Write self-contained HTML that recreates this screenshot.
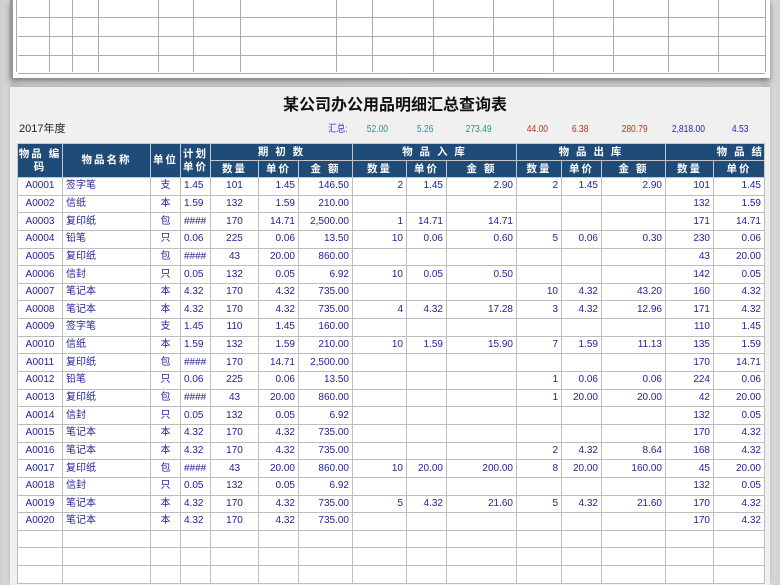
<!DOCTYPE html>
<html><head><meta charset="utf-8"><style>
*{margin:0;padding:0;box-sizing:border-box}
html,body{width:780px;height:585px;overflow:hidden}
body{background:linear-gradient(90deg,#cfcfcf,#e8e8e8 3%,#ececec 97%,#cfcfcf);position:relative;font-family:"Liberation Sans","Noto Sans CJK SC",sans-serif}
.top{position:absolute;left:10px;top:-2px;width:760px;height:80px;background:#fff;box-shadow:0 4px 6px rgba(0,0,0,.45);border-left:3px solid #999;}
.vl{position:absolute;top:0;height:74px;width:1px;background:#aaa}
.hl{position:absolute;left:5px;right:5px;height:1px;background:#aaa}
.panel{position:absolute;left:10px;top:87px;width:760px;height:498px;background:#f0f0f0;box-shadow:0 -2px 4px rgba(0,0,0,.2)}
.title{position:absolute;left:0;width:790px;top:96px;text-align:center;font-size:16px;line-height:20px;font-weight:bold;color:#111}
.yr{position:absolute;left:19px;top:122px;font-size:11px;line-height:14px;color:#222}
.s{position:absolute;top:123px;font-size:10px;line-height:14px;transform:scaleX(.85);transform-origin:right}
table{position:absolute;left:17px;top:143px;border-collapse:collapse;table-layout:fixed;font-size:10px}
td{border:1px solid #bdbdbd;height:17.65px;line-height:12px;background:#fff;color:#22229a;padding:0 3px;white-space:nowrap;overflow:hidden;text-align:right;vertical-align:middle}
th{background:#1f4b78;color:#fff;font-weight:bold;font-size:10.5px;border:1px solid #c8c8c8;height:17px;padding:0;letter-spacing:2px;line-height:13px}
td.c{text-align:center}td.l{text-align:left}
</style></head><body>
<div class="top">
<div class="vl" style="left:3px"></div><div class="vl" style="left:36px"></div><div class="vl" style="left:59px"></div><div class="vl" style="left:85px"></div><div class="vl" style="left:145px"></div><div class="vl" style="left:180px"></div><div class="vl" style="left:227px"></div><div class="vl" style="left:323px"></div><div class="vl" style="left:359px"></div><div class="vl" style="left:420px"></div><div class="vl" style="left:480px"></div><div class="vl" style="left:540px"></div><div class="vl" style="left:600px"></div><div class="vl" style="left:655px"></div><div class="vl" style="left:705px"></div><div class="vl" style="left:752px"></div>
<div class="hl" style="top:19px"></div><div class="hl" style="top:38px"></div><div class="hl" style="top:57px"></div><div class="hl" style="top:75px"></div>
</div>
<div class="panel"></div>
<div class="title">某公司办公用品明细汇总查询表</div>
<div class="yr">2017年度</div>
<div class="s" style="right:432px;color:#3a3ad0">汇总:</div>
<div class="s" style="right:392px;color:#1a9a8a">52.00</div>
<div class="s" style="right:347px;color:#1a9a8a">5.26</div>
<div class="s" style="right:288px;color:#1a9a8a">273.49</div>
<div class="s" style="right:232px;color:#b03a1a">44.00</div>
<div class="s" style="right:192px;color:#b03a1a">6.38</div>
<div class="s" style="right:132px;color:#b03a1a">280.79</div>
<div class="s" style="right:75px;color:#2020e0">2,818.00</div>
<div class="s" style="right:32px;color:#2020e0">4.53</div>
<table>
<colgroup><col style="width:45px"><col style="width:88px"><col style="width:30px"><col style="width:30px"><col style="width:48px"><col style="width:40px"><col style="width:54px"><col style="width:54px"><col style="width:40px"><col style="width:70px"><col style="width:45px"><col style="width:40px"><col style="width:64px"><col style="width:48px"><col style="width:51px"></colgroup>
<tr><th rowspan="2">物品 编码</th><th rowspan="2">物品名称</th><th rowspan="2">单位</th><th rowspan="2">计划单价</th><th colspan="3">期 初 数</th><th colspan="3">物 品 入 库</th><th colspan="3">物 品 出 库</th><th colspan="2" style="text-align:right">物 品 结</th></tr>
<tr><th>数量</th><th>单价</th><th>金 额</th><th>数量</th><th>单价</th><th>金 额</th><th>数量</th><th>单价</th><th>金 额</th><th>数量</th><th>单价</th></tr>
<tr><td class="c">A0001</td><td class="l">签字笔</td><td class="c">支</td><td class="l">1.45</td><td class="c">101</td><td>1.45</td><td>146.50</td><td>2</td><td>1.45</td><td>2.90</td><td>2</td><td>1.45</td><td>2.90</td><td>101</td><td>1.45</td></tr>
<tr><td class="c">A0002</td><td class="l">信纸</td><td class="c">本</td><td class="l">1.59</td><td class="c">132</td><td>1.59</td><td>210.00</td><td></td><td></td><td></td><td></td><td></td><td></td><td>132</td><td>1.59</td></tr>
<tr><td class="c">A0003</td><td class="l">复印纸</td><td class="c">包</td><td class="l">####</td><td class="c">170</td><td>14.71</td><td>2,500.00</td><td>1</td><td>14.71</td><td>14.71</td><td></td><td></td><td></td><td>171</td><td>14.71</td></tr>
<tr><td class="c">A0004</td><td class="l">铅笔</td><td class="c">只</td><td class="l">0.06</td><td class="c">225</td><td>0.06</td><td>13.50</td><td>10</td><td>0.06</td><td>0.60</td><td>5</td><td>0.06</td><td>0.30</td><td>230</td><td>0.06</td></tr>
<tr><td class="c">A0005</td><td class="l">复印纸</td><td class="c">包</td><td class="l">####</td><td class="c">43</td><td>20.00</td><td>860.00</td><td></td><td></td><td></td><td></td><td></td><td></td><td>43</td><td>20.00</td></tr>
<tr><td class="c">A0006</td><td class="l">信封</td><td class="c">只</td><td class="l">0.05</td><td class="c">132</td><td>0.05</td><td>6.92</td><td>10</td><td>0.05</td><td>0.50</td><td></td><td></td><td></td><td>142</td><td>0.05</td></tr>
<tr><td class="c">A0007</td><td class="l">笔记本</td><td class="c">本</td><td class="l">4.32</td><td class="c">170</td><td>4.32</td><td>735.00</td><td></td><td></td><td></td><td>10</td><td>4.32</td><td>43.20</td><td>160</td><td>4.32</td></tr>
<tr><td class="c">A0008</td><td class="l">笔记本</td><td class="c">本</td><td class="l">4.32</td><td class="c">170</td><td>4.32</td><td>735.00</td><td>4</td><td>4.32</td><td>17.28</td><td>3</td><td>4.32</td><td>12.96</td><td>171</td><td>4.32</td></tr>
<tr><td class="c">A0009</td><td class="l">签字笔</td><td class="c">支</td><td class="l">1.45</td><td class="c">110</td><td>1.45</td><td>160.00</td><td></td><td></td><td></td><td></td><td></td><td></td><td>110</td><td>1.45</td></tr>
<tr><td class="c">A0010</td><td class="l">信纸</td><td class="c">本</td><td class="l">1.59</td><td class="c">132</td><td>1.59</td><td>210.00</td><td>10</td><td>1.59</td><td>15.90</td><td>7</td><td>1.59</td><td>11.13</td><td>135</td><td>1.59</td></tr>
<tr><td class="c">A0011</td><td class="l">复印纸</td><td class="c">包</td><td class="l">####</td><td class="c">170</td><td>14.71</td><td>2,500.00</td><td></td><td></td><td></td><td></td><td></td><td></td><td>170</td><td>14.71</td></tr>
<tr><td class="c">A0012</td><td class="l">铅笔</td><td class="c">只</td><td class="l">0.06</td><td class="c">225</td><td>0.06</td><td>13.50</td><td></td><td></td><td></td><td>1</td><td>0.06</td><td>0.06</td><td>224</td><td>0.06</td></tr>
<tr><td class="c">A0013</td><td class="l">复印纸</td><td class="c">包</td><td class="l">####</td><td class="c">43</td><td>20.00</td><td>860.00</td><td></td><td></td><td></td><td>1</td><td>20.00</td><td>20.00</td><td>42</td><td>20.00</td></tr>
<tr><td class="c">A0014</td><td class="l">信封</td><td class="c">只</td><td class="l">0.05</td><td class="c">132</td><td>0.05</td><td>6.92</td><td></td><td></td><td></td><td></td><td></td><td></td><td>132</td><td>0.05</td></tr>
<tr><td class="c">A0015</td><td class="l">笔记本</td><td class="c">本</td><td class="l">4.32</td><td class="c">170</td><td>4.32</td><td>735.00</td><td></td><td></td><td></td><td></td><td></td><td></td><td>170</td><td>4.32</td></tr>
<tr><td class="c">A0016</td><td class="l">笔记本</td><td class="c">本</td><td class="l">4.32</td><td class="c">170</td><td>4.32</td><td>735.00</td><td></td><td></td><td></td><td>2</td><td>4.32</td><td>8.64</td><td>168</td><td>4.32</td></tr>
<tr><td class="c">A0017</td><td class="l">复印纸</td><td class="c">包</td><td class="l">####</td><td class="c">43</td><td>20.00</td><td>860.00</td><td>10</td><td>20.00</td><td>200.00</td><td>8</td><td>20.00</td><td>160.00</td><td>45</td><td>20.00</td></tr>
<tr><td class="c">A0018</td><td class="l">信封</td><td class="c">只</td><td class="l">0.05</td><td class="c">132</td><td>0.05</td><td>6.92</td><td></td><td></td><td></td><td></td><td></td><td></td><td>132</td><td>0.05</td></tr>
<tr><td class="c">A0019</td><td class="l">笔记本</td><td class="c">本</td><td class="l">4.32</td><td class="c">170</td><td>4.32</td><td>735.00</td><td>5</td><td>4.32</td><td>21.60</td><td>5</td><td>4.32</td><td>21.60</td><td>170</td><td>4.32</td></tr>
<tr><td class="c">A0020</td><td class="l">笔记本</td><td class="c">本</td><td class="l">4.32</td><td class="c">170</td><td>4.32</td><td>735.00</td><td></td><td></td><td></td><td></td><td></td><td></td><td>170</td><td>4.32</td></tr>
<tr><td></td><td></td><td></td><td></td><td></td><td></td><td></td><td></td><td></td><td></td><td></td><td></td><td></td><td></td><td></td></tr>
<tr><td></td><td></td><td></td><td></td><td></td><td></td><td></td><td></td><td></td><td></td><td></td><td></td><td></td><td></td><td></td></tr>
<tr><td></td><td></td><td></td><td></td><td></td><td></td><td></td><td></td><td></td><td></td><td></td><td></td><td></td><td></td><td></td></tr>
</table>
</body></html>
